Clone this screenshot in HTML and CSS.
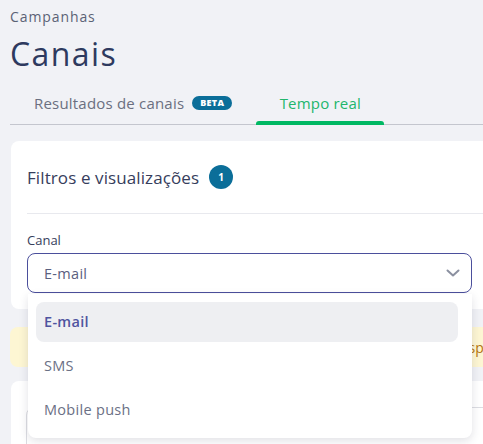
FILE: index.html
```html
<!DOCTYPE html>
<html lang="pt">
<head>
<meta charset="utf-8">
<title>Canais</title>
<link rel="stylesheet" href="styles.css">
</head>
<body>
<div class="page">
  <header class="header">
    <div class="crumb">Campanhas</div>
    <h1 class="title">Canais</h1>
  </header>
  <nav class="tabs">
    <div class="tab">Resultados de canais <span class="beta">BETA</span></div>
    <div class="tab active">Tempo real</div>
  </nav>

  <section class="card filters">
    <div class="card-head">
      <h2 class="card-title">Filtros e visualizações</h2>
      <span class="count">1</span>
    </div>
    <div class="filter-grid">
      <div class="field">
        <label class="label">Canal</label>
        <div class="select-wrap">
          <div class="select">
            <span class="select-value">E-mail</span>
            <svg class="chev" width="14" height="8" viewBox="0 0 14 8"><path d="M1.5 1.5 L7 6.5 L12.5 1.5" fill="none" stroke="#8b90a0" stroke-width="2" stroke-linecap="round" stroke-linejoin="round"/></svg>
          </div>
          <ul class="menu">
            <li class="opt selected">E-mail</li>
            <li class="opt">SMS</li>
            <li class="opt">Mobile push</li>
          </ul>
        </div>
      </div>
      <div class="field"></div>
    </div>
  </section>

  <div class="banner">Os dados em tempo real são atualizados por minuto e correspondem às últimas 24 horas</div>

  <section class="card second">
    <div class="inner-box"></div>
  </section>
</div>
</body>
</html>
```

FILE: styles.css
```css
html, body {
  margin: 0;
  padding: 0;
  background: #f1f2f6;
  overflow: hidden;
  height: 444px;
}
body {
  font-family: "Open Sans", "Noto Sans", sans-serif;
}
.page {
  width: 720px;
  padding: 0 0 0 10px;
}
.header {
  padding-top: 8px;
}
.crumb {
  font-size: 14px;
  line-height: 18px;
  color: #5b6275;
  letter-spacing: 0.9px;
}
.title {
  margin: 10px 0 0;
  font-size: 32px;
  line-height: 36px;
  font-weight: 500;
  color: #2e3a5f;
  letter-spacing: 1.4px;
}
.tabs {
  display: flex;
  margin-top: 14px;
  border-bottom: 1px solid #c4c6ce;
}
.tab {
  display: flex;
  align-items: center;
  gap: 8px;
  height: 38px;
  padding: 0 24px 4px 24px;
  font-size: 15px;
  letter-spacing: 0.2px;
  color: #6b6f80;
  position: relative;
  box-sizing: border-box;
}
.tab.active {
  width: 128px;
  justify-content: center;
  padding: 0 0 4px 0;
  color: #22b66c;
}
.tab.active::after {
  content: "";
  position: absolute;
  left: 0;
  right: 0;
  bottom: -1px;
  height: 4px;
  background: #00b863;
  border-radius: 3px 3px 0 0;
}
.beta {
  display: inline-block;
  background: #0b6e99;
  color: #fff;
  font-size: 9px;
  font-weight: 800;
  line-height: 14px;
  padding: 0 8px;
  border-radius: 8px;
  letter-spacing: 0.3px;
}
.card {
  background: #fff;
  border-radius: 8px;
  margin-left: 1px;
}
.filters {
  margin-top: 16px;
  padding: 0 0 16px 16px;
}
.card-head {
  display: flex;
  align-items: center;
  gap: 10px;
  height: 72px;
  border-bottom: 1px solid #e8e9ee;
}
.card-title {
  margin: 0;
  font-size: 17px;
  font-weight: 500;
  color: #363d5c;
  letter-spacing: 0.1px;
}
.count {
  width: 24px;
  height: 24px;
  border-radius: 50%;
  background: #0b6e99;
  color: #fff;
  font-size: 10px;
  font-weight: 700;
  display: flex;
  align-items: center;
  justify-content: center;
}
.filter-grid {
  display: grid;
  grid-template-columns: 445px 200px;
  gap: 16px;
  padding-top: 18px;
}
.label {
  display: block;
  font-size: 13px;
  line-height: 16px;
  color: #363d5c;
  margin-bottom: 5px;
}
.select-wrap {
  position: relative;
}
.select {
  height: 40px;
  box-sizing: border-box;
  border: 1px solid #4b4f9c;
  border-radius: 8px;
  display: flex;
  align-items: center;
  justify-content: space-between;
  padding: 0 11px 0 16px;
  font-size: 14.5px;
  letter-spacing: 0.3px;
  color: #5a6080;
}
.menu {
  position: absolute;
  top: 41px;
  left: 1px;
  right: 0;
  margin: 0;
  padding: 8px 14px 8px 8px;
  list-style: none;
  background: #fff;
  border-radius: 0 0 8px 8px;
  box-shadow: 0 3px 10px rgba(40, 45, 70, 0.14);
  z-index: 5;
}
.opt {
  height: 40px;
  line-height: 40px;
  padding: 0 8px;
  border-radius: 8px;
  font-size: 14.5px;
  letter-spacing: 0.3px;
  color: #6b7085;
  margin-bottom: 4px;
}
.opt:last-child {
  margin-bottom: 0;
}
.opt.selected {
  background: #eeeff2;
  color: #4f54a0;
  font-weight: 600;
}
.banner {
  margin-top: 18px;
  height: 40px;
  background: #fdf6d3;
  border-radius: 8px;
  display: flex;
  align-items: center;
  padding-left: 67px;
  font-size: 14px;
  color: #b5750f;
  white-space: nowrap;
  overflow: hidden;
}
.second {
  margin-top: 14px;
  height: 120px;
  padding: 26px 0 0 15px;
  box-sizing: border-box;
}
.inner-box {
  height: 60px;
  border: 1px solid #dcdde2;
  border-radius: 8px;
}
```
